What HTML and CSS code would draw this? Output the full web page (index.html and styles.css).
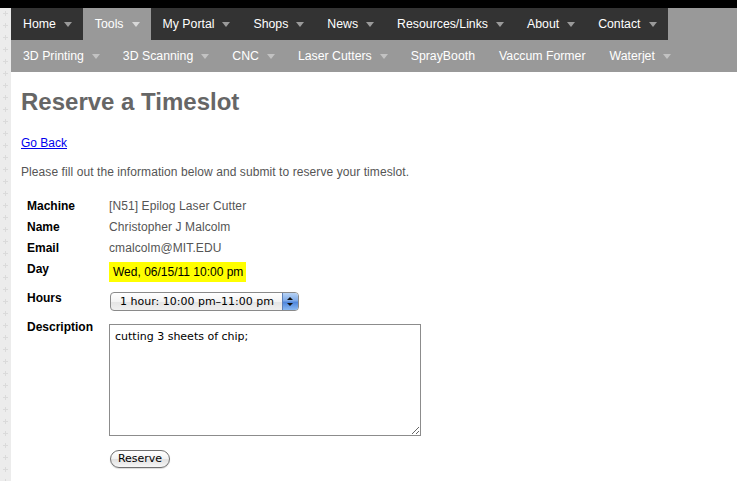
FILE: index.html
```html
<!DOCTYPE html>
<html lang="en">
<head>
<meta charset="utf-8">
<title>Reserve a Timeslot</title>
<link rel="stylesheet" href="styles.css">
</head>
<body>
<div class="topbar"></div>
<div class="page">
  <div class="gutter"></div>
  <div class="main">
    <nav class="primary">
      <ul class="menu menu-main">
        <li class="has-sub"><a href="#">Home</a></li>
        <li class="has-sub active"><a href="#">Tools</a></li>
        <li class="has-sub"><a href="#">My Portal</a></li>
        <li class="has-sub"><a href="#">Shops</a></li>
        <li class="has-sub"><a href="#">News</a></li>
        <li class="has-sub"><a href="#">Resources/Links</a></li>
        <li class="has-sub"><a href="#">About</a></li>
        <li class="has-sub"><a href="#">Contact</a></li>
      </ul>
    </nav>
    <nav class="secondary">
      <ul class="menu menu-sub">
        <li class="has-sub"><a href="#">3D Printing</a></li>
        <li class="has-sub"><a href="#">3D Scanning</a></li>
        <li class="has-sub"><a href="#">CNC</a></li>
        <li class="has-sub"><a href="#">Laser Cutters</a></li>
        <li><a href="#">SprayBooth</a></li>
        <li><a href="#">Vaccum Former</a></li>
        <li class="has-sub"><a href="#">Waterjet</a></li>
      </ul>
    </nav>
    <div class="content">
      <h1>Reserve a Timeslot</h1>
      <p class="back"><a href="#">Go Back</a></p>
      <p class="intro">Please fill out the information below and submit to reserve your timeslot.</p>
      <form class="reserve" action="#">
        <div class="fields">
          <div class="label">Machine</div>
          <div class="value">[N51] Epilog Laser Cutter</div>
          <div class="label">Name</div>
          <div class="value">Christopher J Malcolm</div>
          <div class="label">Email</div>
          <div class="value">cmalcolm@MIT.EDU</div>
          <div class="label">Day</div>
          <div class="value"><span class="day">Wed, 06/15/11 10:00 pm</span></div>
          <div class="label">Hours</div>
          <div class="value">
            <span class="select-wrap">
              <select class="hours">
                <option>1 hour: 10:00 pm–11:00 pm</option>
              </select>
              <span class="stepper"></span>
            </span>
          </div>
          <div class="label">Description</div>
          <div class="value">
            <textarea class="desc">cutting 3 sheets of chip;</textarea>
            <button type="button" class="btn">Reserve</button>
          </div>
        </div>
      </form>
    </div>
  </div>
</div>
</body>
</html>
```

FILE: styles.css
```css
* { box-sizing: border-box; }

html, body {
  margin: 0;
  padding: 0;
}

body {
  background: #ececec;
  font-family: "Liberation Sans", Arial, Helvetica, sans-serif;
  color: #555;
}

.topbar {
  height: 8px;
  background: #000;
}

.page {
  display: flex;
  min-height: calc(100vh - 8px);
}

.gutter {
  width: 11px;
  flex: 0 0 11px;
  background-color: #ececec;
  background-image:
    linear-gradient(to bottom, transparent 5px, #dadada 5px, #dadada 6px, transparent 6px),
    linear-gradient(to bottom, transparent 3px, #dadada 3px, #dadada 8px, transparent 8px);
  background-size: 5px 12px, 1px 12px;
  background-position: 3px 0, 5px 0;
  background-repeat: repeat-y, repeat-y;
}

.main {
  flex: 1;
  background: #fff;
}

/* navigation */
.primary,
.secondary {
  background: #999;
  height: 32px;
}

.menu {
  list-style: none;
  margin: 0;
  padding: 0;
  display: flex;
}

.menu-main {
  display: inline-flex;
  background: #333;
}

.menu li.active {
  background: #999;
}

.menu a {
  display: flex;
  align-items: center;
  height: 32px;
  padding: 0 12px;
  color: #fff;
  text-decoration: none;
  font-size: 12.3px;
  white-space: nowrap;
}

.menu .has-sub a {
  padding-right: 11px;
}

.menu .has-sub a::after {
  content: "";
  margin-left: 8px;
  width: 0;
  height: 0;
  border-left: 4px solid transparent;
  border-right: 4px solid transparent;
  border-top: 5px solid #9a9a9a;
}

.menu-main .active a::after {
  border-top-color: #d8d8d8;
}

.menu-sub .has-sub a::after {
  border-top-color: #c2c2c2;
}

/* content */
.content {
  padding: 16px 10px 0 10px;
}

h1 {
  margin: 0;
  font-size: 24px;
  line-height: 28px;
  font-weight: bold;
  color: #666;
}

.back {
  margin: 20px 0 0;
  font-size: 12px;
  line-height: 15px;
}

.back a {
  color: #00e;
}

.intro {
  margin: 14px 0 0;
  font-size: 12px;
  line-height: 15px;
  letter-spacing: 0.08px;
  color: #555;
}

.reserve {
  margin: 16px 0 0 6px;
}

.fields {
  display: grid;
  grid-template-columns: 82px auto;
  grid-template-rows: 21px 21px 21px 29px 29px auto;
  font-size: 12px;
  line-height: 21px;
}

.label {
  font-weight: bold;
  color: #000;
}

.value {
  color: #555;
  letter-spacing: 0.1px;
}

.day {
  display: inline-block;
  margin-top: 3px;
  padding: 2px 3px 2px 4px;
  line-height: 16px;
  background: #ffff00;
  color: #000;
  letter-spacing: 0;
  vertical-align: top;
}

.select-wrap {
  position: relative;
  display: inline-block;
  margin: 4px 0 0 1px;
  vertical-align: top;
  height: 19px;
  letter-spacing: 0;
}

.hours {
  -webkit-appearance: none;
  appearance: none;
  display: block;
  width: 189px;
  height: 19px;
  margin: 0;
  border: 1px solid #8a8a8a;
  border-radius: 4px;
  padding: 0 0 0 9px;
  background: linear-gradient(#ffffff, #f3f3f3 50%, #e4e4e4 51%, #efefef);
  font-family: "DejaVu Sans", "Lucida Grande", sans-serif;
  font-size: 11px;
  line-height: 17px;
  color: #000;
}

.stepper {
  position: absolute;
  top: 1px;
  right: 1px;
  bottom: 1px;
  width: 16px;
  border-left: 1px solid #5c7fb8;
  border-radius: 0 3px 3px 0;
  background: linear-gradient(#b8d3f5, #7eaae8 45%, #4f86dc 55%, #8ab9f2);
}

.stepper::before,
.stepper::after {
  content: "";
  position: absolute;
  left: 4px;
  width: 0;
  height: 0;
  border-left: 3px solid transparent;
  border-right: 3px solid transparent;
}

.stepper::before {
  top: 4px;
  border-bottom: 3px solid #111;
}

.stepper::after {
  top: 10px;
  border-top: 3px solid #111;
}

.desc {
  display: block;
  margin: 7px 0 0 0;
  width: 312px;
  height: 112px;
  border: 1px solid #8c8c8c;
  padding: 5px 5px 4px;
  font-family: "DejaVu Sans", "Lucida Grande", sans-serif;
  font-size: 11px;
  line-height: 14px;
  letter-spacing: 0;
  color: #000;
  background: #fff;
  resize: both;
}

.btn {
  display: block;
  margin: 14px 0 0 1px;
  width: 60px;
  height: 18px;
  padding: 0;
  border: 1px solid #707070;
  border-radius: 9px;
  background: linear-gradient(#ffffff, #f2f2f2 50%, #e0e0e0 51%, #f6f6f6);
  font-family: "DejaVu Sans", "Lucida Grande", sans-serif;
  font-size: 11px;
  line-height: 16px;
  letter-spacing: 0;
  color: #000;
  box-shadow: 0 1px 1px rgba(0,0,0,0.15);
}
```
